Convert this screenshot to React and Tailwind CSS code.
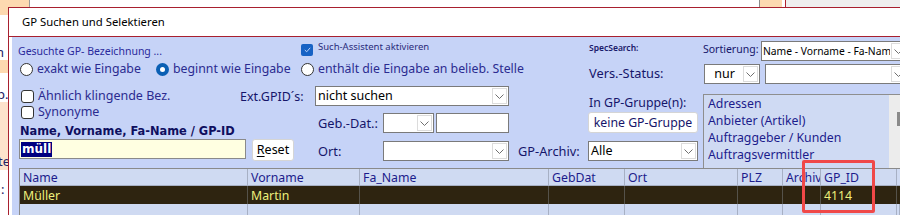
import React from "react";

function Chev() {
  return (
    <svg width="9" height="5" viewBox="0 0 9 5" className="block">
      <polyline points="0.5,0.5 4.5,4.5 8.5,0.5" fill="none" stroke="#707070" strokeWidth="1" />
    </svg>
  );
}

function DropBtn() {
  return (
    <div className="h-full w-[17px] shrink-0 p-[1px]">
      <div className="flex h-full w-full items-center justify-center border border-[#dcdcdc] bg-white">
        <Chev />
      </div>
    </div>
  );
}

function Combo({ cls, text, center, small }) {
  return (
    <div className={"flex h-[20px] shrink-0 border border-[#7a7a7a] bg-white " + cls}>
      <div
        className={
          "min-w-0 flex-1 overflow-hidden whitespace-nowrap text-black " +
          (small ? "pl-[1px] text-[10.3px] leading-[18px] " : "pl-[2px] text-[12.5px] leading-[18px] ") +
          (center ? "text-center" : "")
        }
      >
        {text}
      </div>
      <DropBtn />
    </div>
  );
}

function Radio({ checked }) {
  return checked ? (
    <div className="flex h-[13px] w-[13px] shrink-0 items-center justify-center rounded-full bg-[#0a5fb4]">
      <div className="h-[5px] w-[5px] rounded-full bg-white" />
    </div>
  ) : (
    <div className="h-[13px] w-[13px] shrink-0 rounded-full border border-[#333] bg-white" />
  );
}

function Check({ checked }) {
  return checked ? (
    <div className="flex h-[12px] w-[12px] shrink-0 items-center justify-center rounded-[2px] bg-[#1762c4]">
      <svg width="7" height="6" viewBox="0 0 7 6">
        <polyline points="0.8,3 2.7,4.8 6.2,0.8" fill="none" stroke="#cfe0ff" strokeWidth="0.9" />
      </svg>
    </div>
  ) : (
    <div className="h-[13px] w-[13px] shrink-0 rounded-[3px] border border-[#333] bg-white" />
  );
}

const cols = [
  { w: "w-[228px]", h: "Name", d: "Müller" },
  { w: "w-[112px]", h: "Vorname", d: "Martin" },
  { w: "w-[189px]", h: "Fa_Name", d: "" },
  { w: "w-[76px]", h: "GebDat", d: "" },
  { w: "w-[113px]", h: "Ort", d: "" },
  { w: "w-[45px]", h: "PLZ", d: "" },
  { w: "w-[38px]", h: "Archiv", d: "" },
  { w: "w-[76px]", h: "GP_ID", d: "4114" },
  { w: "flex-1", h: "", d: "" },
];

export default function App() {
  return (
    <div className="relative h-[215px] w-[900px] overflow-hidden bg-white font-['Noto_Sans',sans-serif]">
      {/* background strip */}
      <div className="flex h-[7px]">
        <div className="w-[29px] shrink-0 bg-[#fdd9b0]" />
        <div className="w-[1px] shrink-0 bg-[#9a9a9a]" />
        <div className="w-[729px] shrink-0 bg-white" />
        <div className="w-[1px] shrink-0 bg-[#8a8a8a]" />
        <div className="w-[22px] shrink-0 bg-[#fdd9b0]" />
        <div className="w-[3px] shrink-0 bg-white" />
        <div className="w-[1px] shrink-0 bg-[#b0202e]" />
        <div className="flex-1 bg-[#efefef]" />
      </div>
      <div className="flex h-[208px]">
        {/* left background strip */}
        <div className="flex w-[8px] shrink-0 flex-col overflow-hidden text-[13px] leading-[14px] text-[#222266]">
          <div className="h-[8px] shrink-0 bg-[#fdd9b0]" />
          <div className="h-[45px] shrink-0 bg-white pt-[30px]">
            <div className="ml-[-4px]">n</div>
          </div>
          <div className="h-[13px] shrink-0 bg-[#fdd9b0]" />
          <div className="h-[29px] shrink-0 bg-white pt-[14px]">
            <div className="ml-[-3px] whitespace-nowrap">p.</div>
          </div>
          <div className="h-[68px] shrink-0 bg-[#fde2cc] pt-[52px]">
            <div className="ml-[-2px] whitespace-nowrap">te</div>
          </div>
          <div className="flex-1 bg-white pt-[12px]">
            <div className="ml-[1px]">:</div>
          </div>
        </div>
        {/* dialog */}
        <div className="flex min-w-0 flex-1 flex-col border-l border-t border-[#a8202f]">
          <div className="flex h-[29px] shrink-0 items-center border-b border-[#a8202f] bg-white pl-[13px] text-[11.3px] text-black">
            GP Suchen und Selektieren
          </div>
          <div className="flex min-w-0 flex-1 bg-white pl-[3px]">
            <div className="flex min-w-0 flex-1 flex-col bg-[#c6d3f7]">
              {/* Row U1 */}
              <div className="flex h-[24px] shrink-0">
                <div className="w-[289px] shrink-0 whitespace-nowrap pl-[6px] pt-[7px] text-[10.5px] leading-[14px] text-[#2a2a9c]">
                  Gesuchte GP- Bezeichnung ...
                </div>
                <div className="flex w-[288px] shrink-0 items-start pt-[7px]">
                  <Check checked />
                  <div className="ml-[5px] mt-[-4px] whitespace-nowrap text-[9.5px] leading-[14px] text-[#2a2a7a]">Such-Assistent aktivieren</div>
                </div>
                <div className="w-[114px] shrink-0 whitespace-nowrap pt-[5px] text-[8.5px] font-semibold leading-[12px] text-[#1a1a6a]">SpecSearch:</div>
                <div className="w-[58px] shrink-0 whitespace-nowrap pt-[5px] text-[10.5px] leading-[14px] text-[#15156a]">Sortierung:</div>
                <div className="mt-[4px] shrink-0">
                  <Combo cls="w-[147px]" text="Name - Vorname - Fa-Nam" small />
                </div>
              </div>
              {/* Row U2 */}
              <div className="flex h-[24px] shrink-0">
                <div className="flex h-[16px] w-[577px] shrink-0 items-center text-[12.3px] leading-[16px] text-[#2b2b90]">
                  <div className="flex w-[144px] shrink-0 items-center pl-[8px]">
                    <Radio />
                    <span className="ml-[4px] whitespace-nowrap">exakt wie Eingabe</span>
                  </div>
                  <div className="flex w-[145px] shrink-0 items-center">
                    <Radio checked />
                    <span className="ml-[4px] whitespace-nowrap">beginnt wie Eingabe</span>
                  </div>
                  <div className="flex items-center">
                    <Radio />
                    <span className="ml-[4px] whitespace-nowrap">enthält die Eingabe an belieb. Stelle</span>
                  </div>
                </div>
                <div className="w-[115px] shrink-0 whitespace-nowrap pt-[4px] text-[12.8px] leading-[16px] text-[#15156a]">Vers.-Status:</div>
                <div className="mt-[3px] flex shrink-0">
                  <Combo cls="w-[56px]" text="nur" center />
                  <div className="ml-[5px] shrink-0">
                    <Combo cls="w-[143px]" text="" />
                  </div>
                </div>
              </div>
              {/* lower section */}
              <div className="flex h-[83px] shrink-0">
                {/* col A */}
                <div className="flex w-[300px] shrink-0 flex-col">
                  <div className="mt-[3px] flex h-[16px] shrink-0 items-center text-[12.5px] leading-[16px]">
                    <div className="flex w-[228px] shrink-0 items-center pl-[9px] text-[#2b2b90]">
                      <Check />
                      <span className="ml-[4px] whitespace-nowrap">Ähnlich klingende Bez.</span>
                    </div>
                    <span className="mt-[2px] whitespace-nowrap text-[12.5px] text-[#15156a]">Ext.GPID´s:</span>
                  </div>
                  <div className="flex h-[16px] shrink-0 items-center pl-[9px] text-[12.5px] leading-[16px] text-[#2b2b90]">
                    <Check />
                    <span className="ml-[4px]">Synonyme</span>
                  </div>
                  <div className="mt-[4px] h-[14px] shrink-0 whitespace-nowrap pl-[8px] font-['DejaVu_Sans',sans-serif] text-[11.4px] font-bold leading-[14px] text-[#0f0f5f]">
                    Name, Vorname, Fa-Name / GP-ID
                  </div>
                  <div className="mt-[1px] flex shrink-0">
                    <div className="ml-[7px] flex h-[20px] w-[227px] items-center border border-[#8a8a8a] bg-[#ffffe1] pl-[1px]">
                      <span className="bg-[#000080] px-[1px] font-['DejaVu_Sans',sans-serif] text-[12px] font-bold leading-[15px] text-white">
                        müll
                      </span>
                    </div>
                    <div className="ml-[6px] flex h-[22px] w-[42px] items-center justify-center rounded-[3px] border border-[#d5d5d5] bg-white text-[12.5px] leading-[16px] text-black">
                      <span className="underline decoration-1 underline-offset-2">R</span>eset
                    </div>
                  </div>
                </div>
                {/* col B */}
                <div className="flex w-[388px] shrink-0 flex-col">
                  <div className="flex h-[48px] shrink-0">
                    <div className="flex w-[273px] shrink-0 flex-col">
                      <div className="ml-[3px] mt-[1px]">
                        <Combo cls="w-[194px]" text="nicht suchen" />
                      </div>
                      <div className="mt-[7px] flex h-[20px] items-center">
                        <div className="w-[71px] shrink-0 pl-[6px] text-[12.8px] leading-[16px] text-[#15156a]">Geb.-Dat.:</div>
                        <Combo cls="w-[51px]" text="" />
                        <div className="ml-[2px] h-[20px] w-[73px] shrink-0 border border-[#7a7a7a] bg-white" />
                      </div>
                    </div>
                    <div className="flex w-[115px] shrink-0 flex-col">
                      <div className="mt-[10px] whitespace-nowrap pl-[4px] text-[12.3px] leading-[16px] text-[#15156a]">In GP-Gruppe(n):</div>
                      <div className="ml-[3px] mt-[1px] flex h-[21px] w-[110px] items-center justify-center rounded-[3px] border border-[#d5d5d5] bg-white text-[12.3px] leading-[16px] text-[#15156a]">
                        keine GP-Gruppe
                      </div>
                    </div>
                  </div>
                  <div className="mt-[8px] flex h-[20px] shrink-0 items-center">
                    <div className="w-[71px] shrink-0 pl-[6px] text-[12.8px] leading-[16px] text-[#15156a]">Ort:</div>
                    <Combo cls="w-[126px]" text="" />
                    <div className="ml-[9px] w-[70px] shrink-0 whitespace-nowrap text-[12.8px] leading-[16px] text-[#15156a]">GP-Archiv:</div>
                    <Combo cls="w-[110px]" text="Alle" />
                  </div>
                </div>
                {/* col C list box */}
                <div className="ml-[3px] mt-[9px] flex min-w-0 flex-1 border-l border-t border-[#8e8e8e] bg-[#cfdaf3]">
                  <div className="min-w-0 flex-1 overflow-hidden pl-[4px] text-[12.3px] leading-[17px] text-[#1c1c8c]">
                    <div>Adressen</div>
                    <div>Anbieter (Artikel)</div>
                    <div className="whitespace-nowrap">Auftraggeber / Kunden</div>
                    <div>Auftragsvermittler</div>
                  </div>
                  <div className="relative w-[11px] shrink-0 bg-[#ececec]">
                    <div className="absolute right-0 top-[17px] h-[14px] w-[3px] bg-[#8a8a8a]" />
                  </div>
                </div>
              </div>
              {/* grid */}
              <div className="ml-[7px] flex min-w-0 flex-1 flex-col border-l border-t border-[#8a8a8a] bg-[#cfdaf2] text-[12.3px]">
                <div className="flex h-[17px] shrink-0 border-b border-[#a7b0c4]">
                  {cols.map((c, i) => (
                    <div
                      key={i}
                      className={"shrink-0 overflow-hidden whitespace-nowrap border-r border-[#a7b0c4] pl-[3px] pt-[1px] leading-[16px] text-[#1c1c8c] " + c.w}
                    >
                      {c.h}
                    </div>
                  ))}
                </div>
                <div className="flex h-[18px] shrink-0 bg-[#2e2410]">
                  {cols.map((c, i) => (
                    <div
                      key={i}
                      className={"shrink-0 overflow-hidden whitespace-nowrap border-r border-[#55524a] pl-[3px] pt-[1px] leading-[17px] text-[#eef07c] " + c.w}
                    >
                      {c.d}
                    </div>
                  ))}
                </div>
                <div className="flex flex-1">
                  {cols.map((c, i) => (
                    <div key={i} className={"shrink-0 border-r border-[#a7b0c4] " + c.w} />
                  ))}
                </div>
              </div>
            </div>
          </div>
        </div>
      </div>
      {/* annotation highlight */}
      <div className="absolute left-[802px] top-[160px] h-[53px] w-[73px] rounded-[2px] border-[3px] border-[#f04848]" />
    </div>
  );
}
